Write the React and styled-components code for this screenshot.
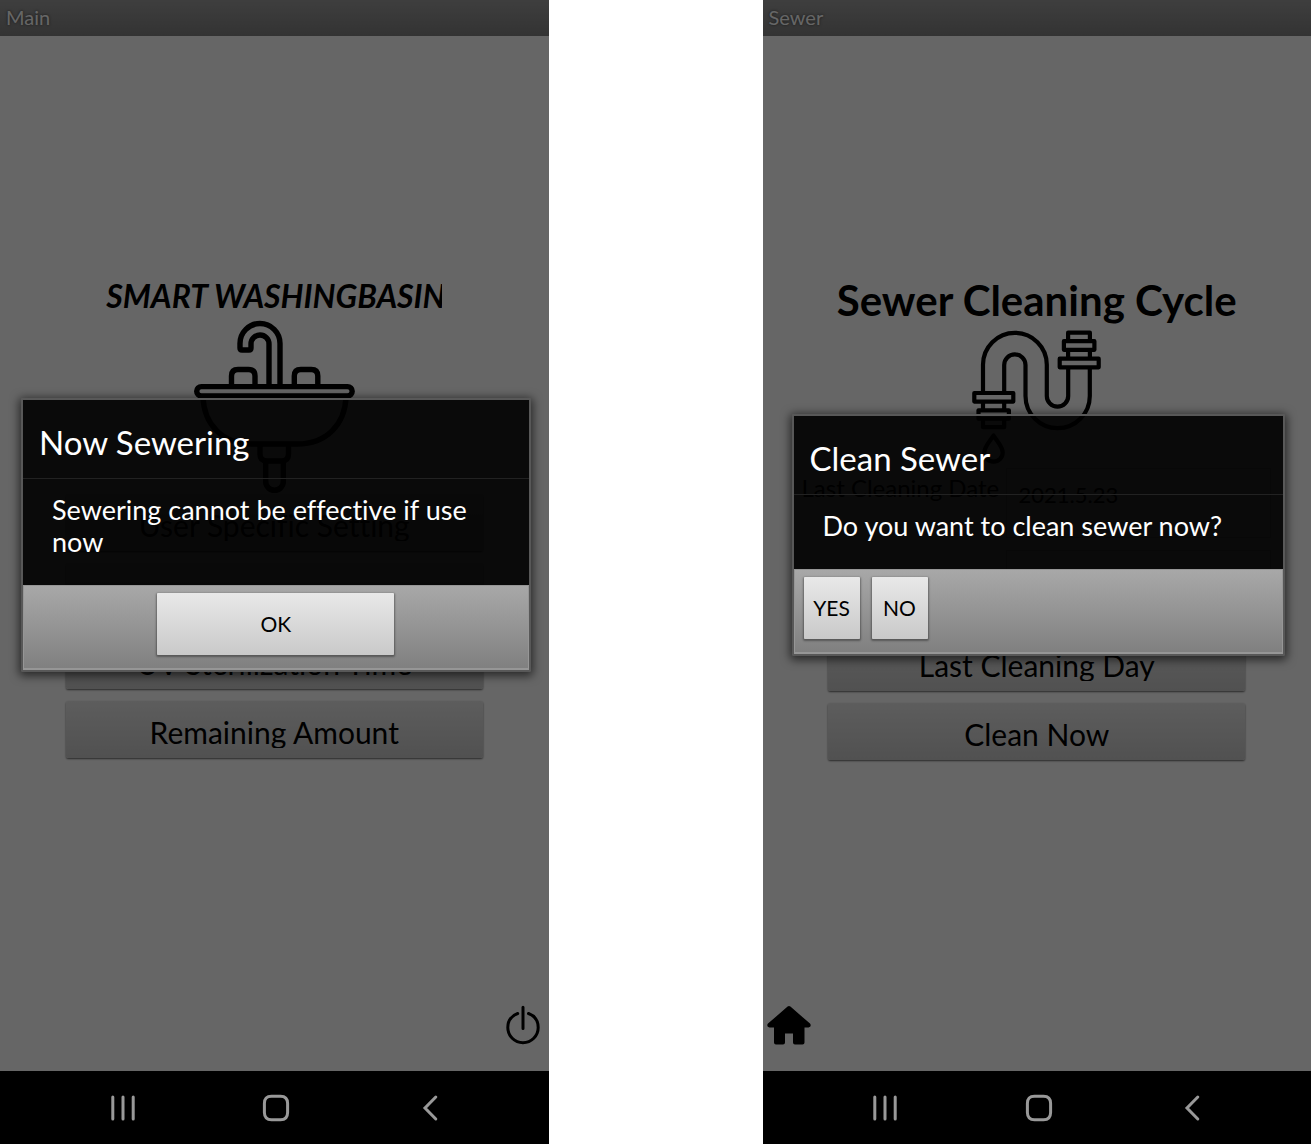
import React from "react";
import styled, { createGlobalStyle } from "styled-components";

const GlobalStyle = createGlobalStyle`
  *, *::before, *::after { box-sizing: border-box; }
  body { margin: 0; background: #fff; }
  button, input { font: inherit; }
`;

const Page = styled.div`
  display: flex;
  gap: 214px;
  min-height: 100vh;
  font-family: Lato, "Liberation Sans", sans-serif;
  font-variant-ligatures: none;
  color: #000;
`;

const Phone = styled.section`
  flex: 1;
  min-width: 0;
  display: flex;
  flex-direction: column;
`;

const Screen = styled.div`
  position: relative;
  flex: 1;
  display: flex;
  flex-direction: column;
  background: #fff;
`;

const TitleBar = styled.header`
  height: 36px;
  padding: 0 6px;
  font-size: 20px;
  line-height: 34px;
  color: #fff;
  text-shadow: 0 0 3px #333;
  background: linear-gradient(#9c9c9c, #808080);
`;

const Main = styled.main`
  flex: 1;
  display: flex;
  flex-direction: column;
  align-items: center;
  justify-content: center;
`;

const Heading = styled.h1`
  margin: 0;
  max-width: ${(p) => (p.$clipped ? "336px" : "none")};
  overflow: hidden;
  white-space: nowrap;
  font-size: ${(p) => (p.$clipped ? "32px" : "42px")};
  line-height: ${(p) => (p.$clipped ? "48px" : "60px")};
  font-style: ${(p) => (p.$clipped ? "italic" : "normal")};
  font-weight: 700;
`;

const Drawing = styled.svg`
  display: block;
  fill: none;
  stroke: #000;
  stroke-width: ${(p) => p.$stroke}px;
  stroke-linejoin: round;
  stroke-linecap: round;
`;

const Menu = styled.nav`
  width: 76%;
  display: flex;
  flex-direction: column;
  gap: 12px;
`;

const MenuButton = styled.button`
  height: 57px;
  padding: 2px 12px 0;
  border: 0;
  border-radius: 2px;
  font-size: 30px;
  line-height: 40px;
  color: #000;
  background: linear-gradient(#e8e8e8, #cacaca);
  box-shadow: 0 1px 2px rgba(0, 0, 0, 0.6);
`;

const MenuLabel = styled.span`
  display: block;
  height: 36px;
  overflow: hidden;
`;

const Fields = styled.div`
  align-self: stretch;
  display: flex;
  flex-direction: column;
  gap: 12px;
  padding: 4px 40px 14px 39px;
`;

const FieldRow = styled.div`
  display: grid;
  grid-template-columns: 204px 1fr;
  align-items: start;
`;

const FieldLabel = styled.label`
  font-size: 24px;
  line-height: 40px;
  white-space: nowrap;
`;

const FieldInput = styled.input`
  width: 100%;
  height: 70px;
  padding: 0 12px 16px;
  border: 1px solid #d8d8d8;
  background: #fafafa;
  color: #000;
  font-size: 22px;
`;

const Footer = styled.footer`
  display: flex;
  justify-content: ${(p) => (p.$end ? "flex-end" : "flex-start")};
  padding: ${(p) => (p.$end ? "12px 8px 26px" : "12px 4px 26px")};
`;

const IconButton = styled.button`
  display: block;
  padding: 0;
  border: 0;
  background: none;
  color: ${(p) => p.$color || "#000"};
  svg { display: block; }
`;

const Scrim = styled.div`
  position: absolute;
  inset: 0;
  display: flex;
  align-items: center;
  padding: ${(p) => (p.$wide ? "0 18px 2px 21px" : "0 26px 2px 29px")};
  background: rgba(0, 0, 0, 0.6);
`;

const Dialog = styled.div`
  flex: 1;
  border: 2px solid #585858;
  border-radius: 2px;
  background: rgba(0, 0, 0, 0.9);
  box-shadow: 0 2px 10px 2px rgba(0, 0, 0, 0.6);
  color: #fff;
`;

const DialogTitle = styled.h2`
  margin: 0;
  padding: 22px 16px 16px;
  border-bottom: 1px solid #222;
  font-size: 33px;
  line-height: 40px;
  font-weight: 400;
`;

const Message = styled.p`
  margin: 0;
  padding: 15px 20px 27px 29px;
  font-size: 27px;
  line-height: 32px;
`;

const Actions = styled.div`
  display: flex;
  justify-content: ${(p) => (p.$centered ? "center" : "flex-start")};
  gap: 12px;
  padding: 7px 9px 13px;
  border: solid #969696;
  border-width: 1px 1px 2px;
  background: linear-gradient(#a8a8a8, #808080);
`;

const ActionButton = styled.button`
  width: ${(p) => (p.$wide ? "237px" : "56px")};
  height: 62px;
  padding: 0;
  border: 0;
  border-radius: 1px;
  color: #000;
  font-size: 21px;
  background: linear-gradient(#e8e8e8, #c9c9c9);
  box-shadow: 0 1px 2px 1px rgba(0, 0, 0, 0.35);
`;

const SystemBar = styled.nav`
  display: grid;
  grid-template-columns: repeat(3, 1fr);
  place-items: center;
  height: 73px;
  padding: 0 42px 0 46px;
  background: #000;
`;

const SinkDrawing = () => (
  <Drawing $stroke={5.4} width="161" height="174" viewBox="194 320 161 174" aria-hidden="true">
    <path d="M269 386V344a9 9 0 0 0-18 0v4q0 2-2 2h-7q-2 0-2-2v-4.500a20 20 0 0 1 40 0V386" />
    <path d="M231.500 386V376q0-6.500 6.500-6.500h10.500q6.500 0 6.500 6.500V386" />
    <path d="M294.300 386V376q0-6.500 6.500-6.500h10.500q6.500 0 6.500 6.500V386" />
    <rect x="196.700" y="386.600" width="155.500" height="9.400" rx="4.700" />
    <path d="M203 397C204 424 222 444 252 444H297C327 444 345 424 346 397" />
    <path d="M260 445v9q0 7 7 7h14.500q7 0 7-7v-9" />
    <path d="M265.700 462v19.500a8.800 8.800 0 0 0 17.600 0V462" />
  </Drawing>
);

const PipeDrawing = () => (
  <Drawing $stroke={4.2} width="129" height="134" viewBox="972.500 331 129 134" aria-hidden="true">
    <path d="M983.500 394V365.700a31.900 31.900 0 0 1 63.800 0V397a10.700 10.700 0 0 0 21.400 0V369" />
    <path d="M1004.700 394V366a10.650 10.650 0 0 1 21.300 0V397a32.150 32.150 0 0 0 64.300 0V369" />
    <rect x="1060.200" y="359.700" width="39" height="8.600" />
    <rect x="1064.400" y="342.200" width="30.500" height="8.600" />
    <path d="M1068.600 342V333.700h21.800V342M1068.600 351v8M1090.400 351v8" />
    <rect x="974.800" y="394" width="39" height="8.600" />
    <rect x="979" y="411.300" width="30.400" height="8.400" />
    <path d="M983.500 403v8M1004.700 403v8M983.500 420v8.200h21.200V420" />
    <path d="M994 436.500c-3 5-9.200 11-9.200 17a9.200 9.200 0 0 0 18.400 0c0-6-6.200-12-9.200-17z" />
  </Drawing>
);

const PowerIcon = () => (
  <svg width="36" height="40" viewBox="505 1005 36 40" fill="none" stroke="currentColor" strokeWidth="3" strokeLinecap="round" aria-hidden="true">
    <path d="M517.700 1013.500C511 1016 507.800 1021.500 507.800 1027.500a15.200 15.200 0 0 0 30.400 0C538.200 1021.500 535 1016 528.500 1013.500M523 1007.200V1028.500" />
  </svg>
);

const HouseIcon = () => (
  <svg width="44" height="40" viewBox="0 0 44 40" fill="currentColor" aria-hidden="true">
    <path d="M20.600 1.600q1.400-1.200 2.800 0L43 18.600c1.300 1.500.7 3.800-1.400 3.800H37.500V37.500q0 2-2 2H28q-2 0-2-2V28.500H18V37.500q0 2-2 2H9q-2 0-2-2V22.400H2.400C.3 22.400-.3 20.100 1 18.600z" />
  </svg>
);

const RecentsIcon = () => (
  <svg width="26" height="28" viewBox="0 0 26 28" stroke="currentColor" strokeWidth="3" strokeLinecap="round" aria-hidden="true">
    <path d="M2.800 3V25M13 3V25M23.200 3V25" />
  </svg>
);

const HomeIcon = () => (
  <svg width="28" height="28" viewBox="0 0 28 28" fill="none" stroke="currentColor" strokeWidth="3" aria-hidden="true">
    <path d="M9.500 2.200h9Q25.600 2.200 25.600 9.500v9Q25.600 25.800 18.500 25.800h-9Q2.400 25.800 2.400 18.500v-9Q2.400 2.200 9.500 2.200z" />
  </svg>
);

const BackIcon = () => (
  <svg width="16" height="28" viewBox="0 0 16 28" fill="none" stroke="currentColor" strokeWidth="3" strokeLinecap="round" strokeLinejoin="miter" aria-hidden="true">
    <path d="M13.800 3L3 14L13.800 25" />
  </svg>
);

const SystemButtons = () => (
  <SystemBar aria-label="System">
    <IconButton $color="#999" aria-label="Recent apps"><RecentsIcon /></IconButton>
    <IconButton $color="#999" aria-label="Home screen"><HomeIcon /></IconButton>
    <IconButton $color="#999" aria-label="Back"><BackIcon /></IconButton>
  </SystemBar>
);

function MainScreen() {
  return (
    <Phone>
      <Screen>
        <TitleBar>Main</TitleBar>
        <Main>
          <Heading $clipped>SMART WASHINGBASIN</Heading>
          <SinkDrawing />
          <Menu>
            <MenuButton><MenuLabel>User Specific Setting</MenuLabel></MenuButton>
            <MenuButton aria-label="Menu item" />
            <MenuButton><MenuLabel>UV Sterilization Time</MenuLabel></MenuButton>
            <MenuButton><MenuLabel>Remaining Amount</MenuLabel></MenuButton>
          </Menu>
        </Main>
        <Footer $end>
          <IconButton aria-label="Power"><PowerIcon /></IconButton>
        </Footer>
        <Scrim $wide>
          <Dialog role="dialog" aria-labelledby="sewering-title">
            <DialogTitle id="sewering-title">Now Sewering</DialogTitle>
            <Message>Sewering cannot be effective if use now</Message>
            <Actions $centered>
              <ActionButton $wide>OK</ActionButton>
            </Actions>
          </Dialog>
        </Scrim>
      </Screen>
      <SystemButtons />
    </Phone>
  );
}

function SewerScreen() {
  return (
    <Phone>
      <Screen>
        <TitleBar>Sewer</TitleBar>
        <Main>
          <Heading>Sewer Cleaning Cycle</Heading>
          <PipeDrawing />
          <Fields>
            <FieldRow>
              <FieldLabel htmlFor="last-date">Last Cleaning Date</FieldLabel>
              <FieldInput id="last-date" defaultValue="2021.5.23" />
            </FieldRow>
            <FieldRow>
              <span />
              <FieldInput aria-label="Next date" />
            </FieldRow>
          </Fields>
          <Menu>
            <MenuButton><MenuLabel>Last Cleaning Day</MenuLabel></MenuButton>
            <MenuButton><MenuLabel>Clean Now</MenuLabel></MenuButton>
          </Menu>
        </Main>
        <Footer>
          <IconButton aria-label="Home"><HouseIcon /></IconButton>
        </Footer>
        <Scrim>
          <Dialog role="dialog" aria-labelledby="clean-title">
            <DialogTitle id="clean-title">Clean Sewer</DialogTitle>
            <Message>Do you want to clean sewer now?</Message>
            <Actions>
              <ActionButton>YES</ActionButton>
              <ActionButton>NO</ActionButton>
            </Actions>
          </Dialog>
        </Scrim>
      </Screen>
      <SystemButtons />
    </Phone>
  );
}

export default function App() {
  return (
    <>
      <GlobalStyle />
      <Page>
        <MainScreen />
        <SewerScreen />
      </Page>
    </>
  );
}
